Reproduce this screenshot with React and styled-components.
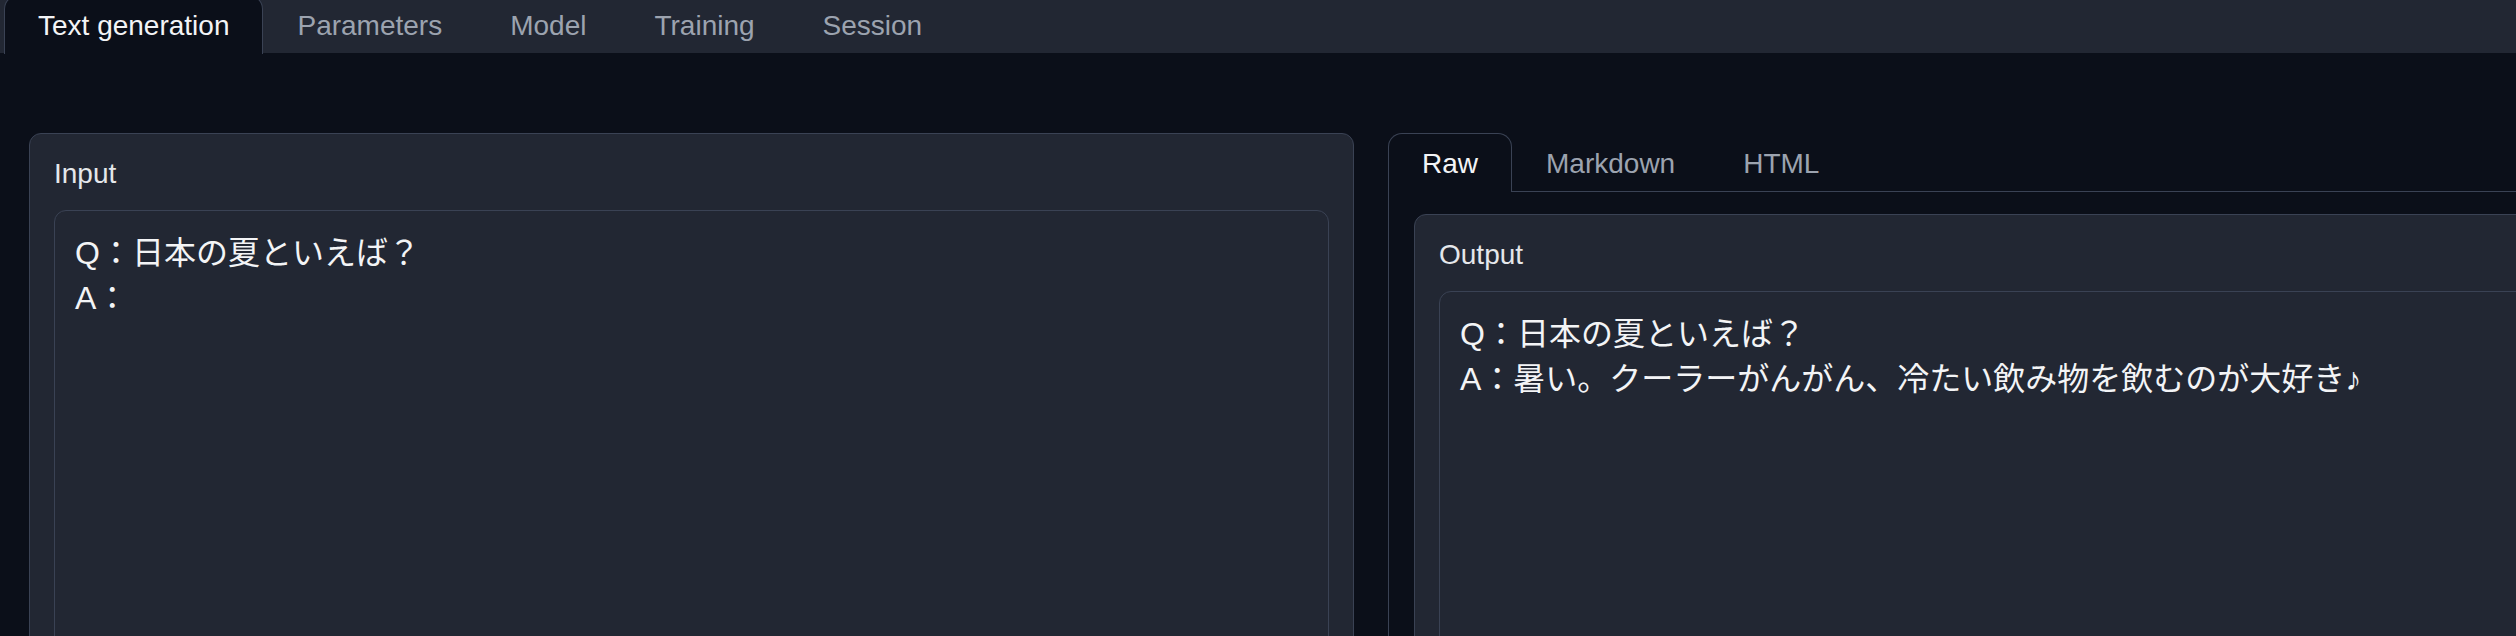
import React from "react";
import styled, { createGlobalStyle } from "styled-components";

const line = "#3a4254";
const panel = "#222733";
const page = "#0b0f19";

const GlobalStyle = createGlobalStyle`
  html, body {
    margin: 0;
    padding: 0;
    background: ${page};
    overflow: hidden;
  }
  body {
    font-family: "Liberation Sans", "Noto Sans CJK JP", sans-serif;
  }
`;

const Page = styled.div`
  width: 2742px;
  min-height: 636px;
`;

const TopNav = styled.nav`
  display: flex;
  height: 58px;
  margin-top: -5px;
  padding-left: 4px;
  background: ${panel};
`;

const Tab = styled.button`
  font-family: inherit;
  font-size: 28px;
  line-height: 42px;
  padding: ${(p) => (p.$active ? "9px 33px 7px" : "9px 33px 6px")};
  margin: 0 0 ${(p) => (p.$active ? "-1px" : "0")};
  border: 1px solid ${(p) => (p.$active ? line : "transparent")};
  border-bottom: none;
  border-radius: 14px 14px 0 0;
  background: ${(p) => (p.$active ? page : "transparent")};
  color: ${(p) => (p.$active ? "#f3f4f6" : "#9ca3af")};
  white-space: nowrap;
  cursor: pointer;
`;

const Main = styled.main`
  display: flex;
  align-items: flex-start;
  gap: 34px;
  padding: 80px 0 0 29px;
`;

const Column = styled.section`
  width: 1325px;
  flex: none;
`;

const Block = styled.div`
  background: ${panel};
  border: 1px solid ${line};
  border-radius: 12px;
  padding: 19px 24px 24px;
`;

const Label = styled.span`
  display: block;
  font-size: 28px;
  line-height: 42px;
  color: #e5e7eb;
  margin-bottom: 15px;
`;

const TextBox = styled.textarea`
  display: block;
  width: 100%;
  height: ${(p) => p.$height}px;
  box-sizing: border-box;
  background: transparent;
  border: 1px solid ${line};
  border-radius: 12px;
  padding: 20px;
  font-family: "Liberation Sans", "Noto Sans CJK JP", sans-serif;
  font-size: 32px;
  line-height: 45px;
  color: #f3f4f6;
  resize: none;
  outline: none;
`;

const TabList = styled.div`
  display: flex;
  border-bottom: 1px solid ${line};
`;

const TabPanel = styled.div`
  border: 1px solid ${line};
  border-top: none;
  padding: 22px 24px 24px 25px;
`;

const topTabs = ["Text generation", "Parameters", "Model", "Training", "Session"];
const viewTabs = ["Raw", "Markdown", "HTML"];

const question = "Q：日本の夏といえば？";
const inputText = `${question}\nA：`;
const outputText = `${question}\nA：暑い。クーラーがんがん、冷たい飲み物を飲むのが大好き♪`;

export default function App() {
  return (
    <Page>
      <GlobalStyle />
      <TopNav>
        {topTabs.map((t, i) => (
          <Tab key={t} $active={i === 0}>
            {t}
          </Tab>
        ))}
      </TopNav>
      <Main>
        <Column>
          <Block>
            <Label>Input</Label>
            <TextBox $height={600} value={inputText} readOnly />
          </Block>
        </Column>
        <Column>
          <TabList>
            {viewTabs.map((t, i) => (
              <Tab key={t} $active={i === 0}>
                {t}
              </Tab>
            ))}
          </TabList>
          <TabPanel>
            <Block>
              <Label>Output</Label>
              <TextBox $height={600} value={outputText} readOnly />
            </Block>
          </TabPanel>
        </Column>
      </Main>
    </Page>
  );
}
